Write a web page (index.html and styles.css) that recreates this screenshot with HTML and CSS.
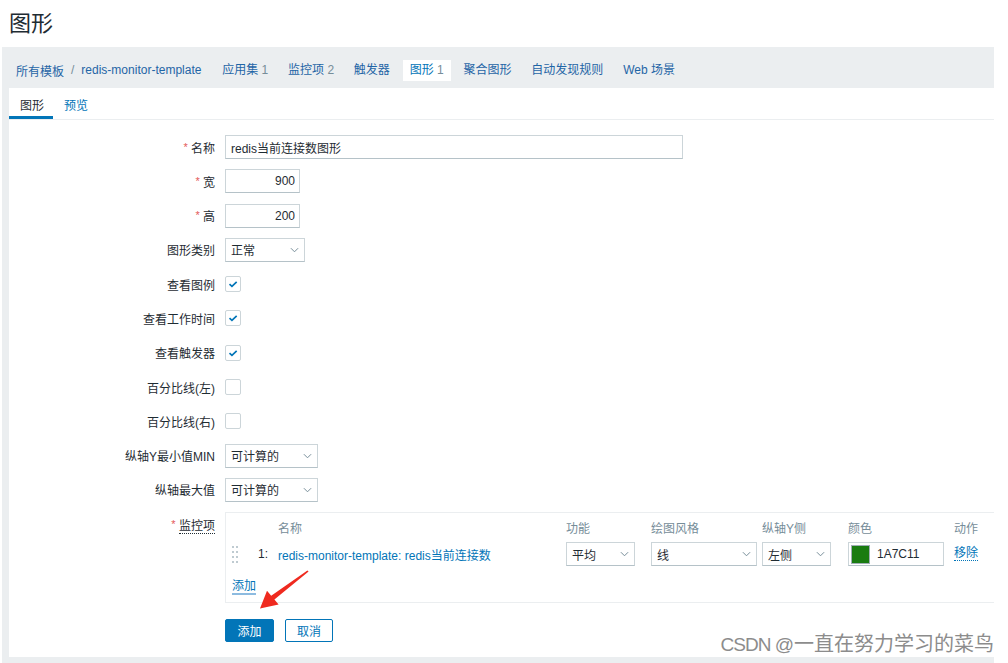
FILE: index.html
```html
<!DOCTYPE html>
<html lang="zh-CN">
<head>
<meta charset="utf-8">
<title>图形</title>
<link rel="stylesheet" href="styles.css">
</head>
<body>
<h1 class="page-title">图形</h1>
<div class="wrap">
  <nav class="nav">
    <div class="crumbs">
      <a class="nav-link" href="#">所有模板</a>
      <span class="sep">/</span>
      <a class="nav-link" href="#">redis-monitor-template</a>
    </div>
    <a class="nav-item" href="#">应用集 <span class="cnt">1</span></a>
    <a class="nav-item" href="#">监控项 <span class="cnt">2</span></a>
    <a class="nav-item" href="#">触发器</a>
    <span class="nav-item selected">图形 <span class="cnt">1</span></span>
    <a class="nav-item" href="#">聚合图形</a>
    <a class="nav-item" href="#">自动发现规则</a>
    <a class="nav-item" href="#">Web 场景</a>
  </nav>
  <div class="panel">
    <div class="tabs">
      <span class="tab active">图形</span>
      <a class="tab" href="#">预览</a>
    </div>
    <form class="form">
      <label class="lbl"><span class="req">*</span> 名称</label>
      <div class="ctl"><input class="inp inp-name" type="text" value="redis当前连接数图形"></div>

      <label class="lbl"><span class="req">*</span> 宽</label>
      <div class="ctl"><input class="inp inp-num" type="text" value="900"></div>

      <label class="lbl"><span class="req">*</span> 高</label>
      <div class="ctl"><input class="inp inp-num" type="text" value="200"></div>

      <label class="lbl">图形类别</label>
      <div class="ctl"><div class="sel w80"><span>正常</span><svg class="chev" viewBox="0 0 10 6"><path d="M1 1l4 4 4-4"/></svg></div></div>

      <label class="lbl">查看图例</label>
      <div class="ctl"><span class="cb checked"><svg viewBox="0 0 16 16"><path d="M4 8.2l2.8 2.6L12.2 5.6"/></svg></span></div>

      <label class="lbl">查看工作时间</label>
      <div class="ctl"><span class="cb checked"><svg viewBox="0 0 16 16"><path d="M4 8.2l2.8 2.6L12.2 5.6"/></svg></span></div>

      <label class="lbl">查看触发器</label>
      <div class="ctl"><span class="cb checked"><svg viewBox="0 0 16 16"><path d="M4 8.2l2.8 2.6L12.2 5.6"/></svg></span></div>

      <label class="lbl">百分比线(左)</label>
      <div class="ctl"><span class="cb"></span></div>

      <label class="lbl">百分比线(右)</label>
      <div class="ctl"><span class="cb"></span></div>

      <label class="lbl">纵轴Y最小值MIN</label>
      <div class="ctl"><div class="sel w93"><span>可计算的</span><svg class="chev" viewBox="0 0 10 6"><path d="M1 1l4 4 4-4"/></svg></div></div>

      <label class="lbl">纵轴最大值</label>
      <div class="ctl"><div class="sel w93"><span>可计算的</span><svg class="chev" viewBox="0 0 10 6"><path d="M1 1l4 4 4-4"/></svg></div></div>

      <label class="lbl lbl-top"><span class="req">*</span> <span class="ul">监控项</span></label>
      <div class="items">
        <div class="grid">
          <span></span><span></span>
          <span class="th">名称</span>
          <span class="th">功能</span>
          <span class="th">绘图风格</span>
          <span class="th">纵轴Y侧</span>
          <span class="th">颜色</span>
          <span class="th">动作</span>

          <span class="handle"><i></i><i></i><i></i><i></i><i></i><i></i><i></i><i></i></span>
          <span class="num">1:</span>
          <a class="item-link" href="#">redis-monitor-template: redis当前连接数</a>
          <div class="sel w69"><span>平均</span><svg class="chev" viewBox="0 0 10 6"><path d="M1 1l4 4 4-4"/></svg></div>
          <div class="sel w106"><span>线</span><svg class="chev" viewBox="0 0 10 6"><path d="M1 1l4 4 4-4"/></svg></div>
          <div class="sel w69"><span>左侧</span><svg class="chev" viewBox="0 0 10 6"><path d="M1 1l4 4 4-4"/></svg></div>
          <div class="color"><span class="swatch"></span><span>1A7C11</span></div>
          <a class="act" href="#">移除</a>
        </div>
        <a class="add-link" href="#">添加</a>
      </div>

      <span></span>
      <div class="buttons">
        <button type="button" class="btn primary">添加</button>
        <button type="button" class="btn alt">取消</button>
      </div>
    </form>
  </div>
</div>
<svg class="arrow" width="1008" height="663" viewBox="0 0 1008 663">
  <polygon points="308.6,571.6 274.4,599.6 278.6,604.6 260,608.5 267,590.8 271.2,595.8 307.4,570.4"/>
</svg>
<div class="watermark"><span class="wm-latin">CSDN @</span>一直在努力学习的菜鸟</div>
</body>
</html>
```
FILE: styles.css
```css
* { box-sizing: border-box; }
html, body { margin: 0; padding: 0; }
body {
  width: 1008px;
  height: 663px;
  overflow: hidden;
  background: #fff;
  font-family: "Liberation Sans", Arial, "Noto Sans CJK SC", sans-serif;
  font-size: 12px;
  color: #1f2c33;
  position: relative;
}
a { text-decoration: none; color: #0275b8; }

.page-title {
  margin: 0;
  height: 47px;
  line-height: 47px;
  padding-left: 9px;
  font-size: 22px;
  font-weight: normal;
  color: #1f2c33;
}

.wrap {
  margin-left: 2px;
  width: 992px;
  height: 616px;
  background: #ebeef0;
  display: flex;
  flex-direction: column;
}

.nav {
  height: 41px;
  display: flex;
  align-items: center;
  gap: 5.8px;
  padding: 5px 0 0 14px;
}
.crumbs { display: flex; align-items: center; margin-right: 8px; }
.sep { color: #768d99; margin: 0 7px 0 7px; }
.nav-link, .nav-item { color: #1f65a6; white-space: nowrap; }
.nav-item {
  padding: 0 7px;
  height: 21px;
  line-height: 21px;
  display: inline-block;
}
.nav-item.selected { background: #fff; color: #0275b8; }
.cnt { color: #768d99; }

.panel {
  flex: 1;
  margin: 0 0 6px 7px;
  background: #fff;
  position: relative;
}

.tabs {
  display: flex;
  height: 32px;
  border-bottom: 1px solid #ebeef0;
}
.tab {
  padding: 8px 10px 0 11px;
  height: 31px;
  color: #0275b8;
}
.tab.active {
  color: #1f2c33;
  border-bottom: 3px solid #0275b8;
  padding-left: 11px;
  padding-right: 9px;
}

.form {
  display: grid;
  grid-template-columns: 206px 1fr;
  column-gap: 10px;
  row-gap: 10.3px;
  padding-top: 15px;
}
.lbl {
  text-align: right;
  align-self: center;
  white-space: nowrap;
}
.lbl-top { align-self: start; padding-top: 4px; }
.req { color: #e45959; font-size: 11px; vertical-align: 2px; }
.ul { border-bottom: 1px dotted #1f2c33; }
.ctl { height: 24px; display: flex; align-items: center; }

.inp {
  height: 24px;
  border: 1px solid #ccd5d9;
  border-bottom-color: #b5c2c8;
  background: #fff;
  font-family: inherit;
  font-size: 12px;
  color: #1f2c33;
  padding: 0 5px;
  outline: none;
  border-radius: 0;
}
.inp-name { width: 458px; }
.inp-num { width: 75px; text-align: right; padding-right: 4px; }

.sel {
  height: 24px;
  border: 1px solid #ccd5d9;
  border-bottom-color: #b5c2c8;
  background: #fff;
  display: flex;
  align-items: center;
  justify-content: space-between;
  padding: 0 5px 0 5px;
}
.w69 { width: 69px; }
.w80 { width: 80px; }
.w93 { width: 93px; }
.w106 { width: 106px; }
.chev { width: 9px; height: 6px; }
.chev path { fill: none; stroke: #768d99; stroke-width: 1.1; }

.cb {
  width: 16px;
  height: 16px;
  border: 1px solid #ccd5d9;
  border-radius: 2px;
  background: #fff;
  display: inline-block;
}
.cb svg { width: 14px; height: 14px; display: block; }
.cb svg path { fill: none; stroke: #0275b8; stroke-width: 1.9; }

.items {
  border: 1px solid #ebeef0;
  border-right: none;
  height: 91px;
  padding: 7px 0 0 5px;
}
.grid {
  display: grid;
  grid-template-columns: 20px 27px 288px 85px 111px 86px 106px 1fr;
  grid-template-rows: 15px 24px;
  row-gap: 7px;
  align-items: center;
}
.th { color: #768d99; }
.handle {
  display: grid;
  grid-template-columns: 2px 2px;
  grid-auto-rows: 2px;
  column-gap: 2px;
  row-gap: 3px;
  padding-left: 1px;
}
.handle i { background: #bfcbd1; display: block; }
.num { text-align: right; padding-right: 10px; }
.item-link { color: #0275b8; white-space: nowrap; }
.color {
  width: 96px;
  height: 24px;
  border: 1px solid #ccd5d9;
  border-bottom-color: #b5c2c8;
  display: flex;
  align-items: center;
  gap: 7px;
  padding-left: 2px;
}
.swatch {
  width: 19px;
  height: 19px;
  background: #1a7c11;
  border: 1px solid #a0aeb5;
}
.act { color: #0275b8; border-bottom: 1px dotted #0275b8; justify-self: start; line-height: 13px; }
.add-link {
  display: inline-block;
  margin-top: 13px;
  margin-left: 1px;
  color: #0275b8;
  border-bottom: 2px solid #8dbbe0;
  line-height: 14px;
}

.buttons {
  display: flex;
  gap: 11px;
  margin-top: 5px;
}
.btn {
  height: 23px;
  padding: 0 11px;
  font-family: inherit;
  font-size: 12px;
  border-radius: 2px;
  border: 1px solid #0275b8;
}
.btn.primary { background: #0275b8; color: #fff; width: 49px; }
.btn.alt { background: #fff; color: #0275b8; width: 48px; }

.arrow {
  position: absolute;
  left: 0;
  top: 0;
  pointer-events: none;
}
.arrow polygon { fill: #ef2a1f; }

.watermark {
  position: absolute;
  right: 14px;
  top: 630px;
  font-size: 20px;
  line-height: 26px;
  color: #8c8c8c;
  font-family: "Noto Sans CJK SC", sans-serif;
  white-space: nowrap;
  text-shadow: 0 0 1px #fff;
}
.wm-latin { font-family: "Liberation Sans", sans-serif; font-size: 19px; letter-spacing: -1px; margin-right: 1px; }
```
